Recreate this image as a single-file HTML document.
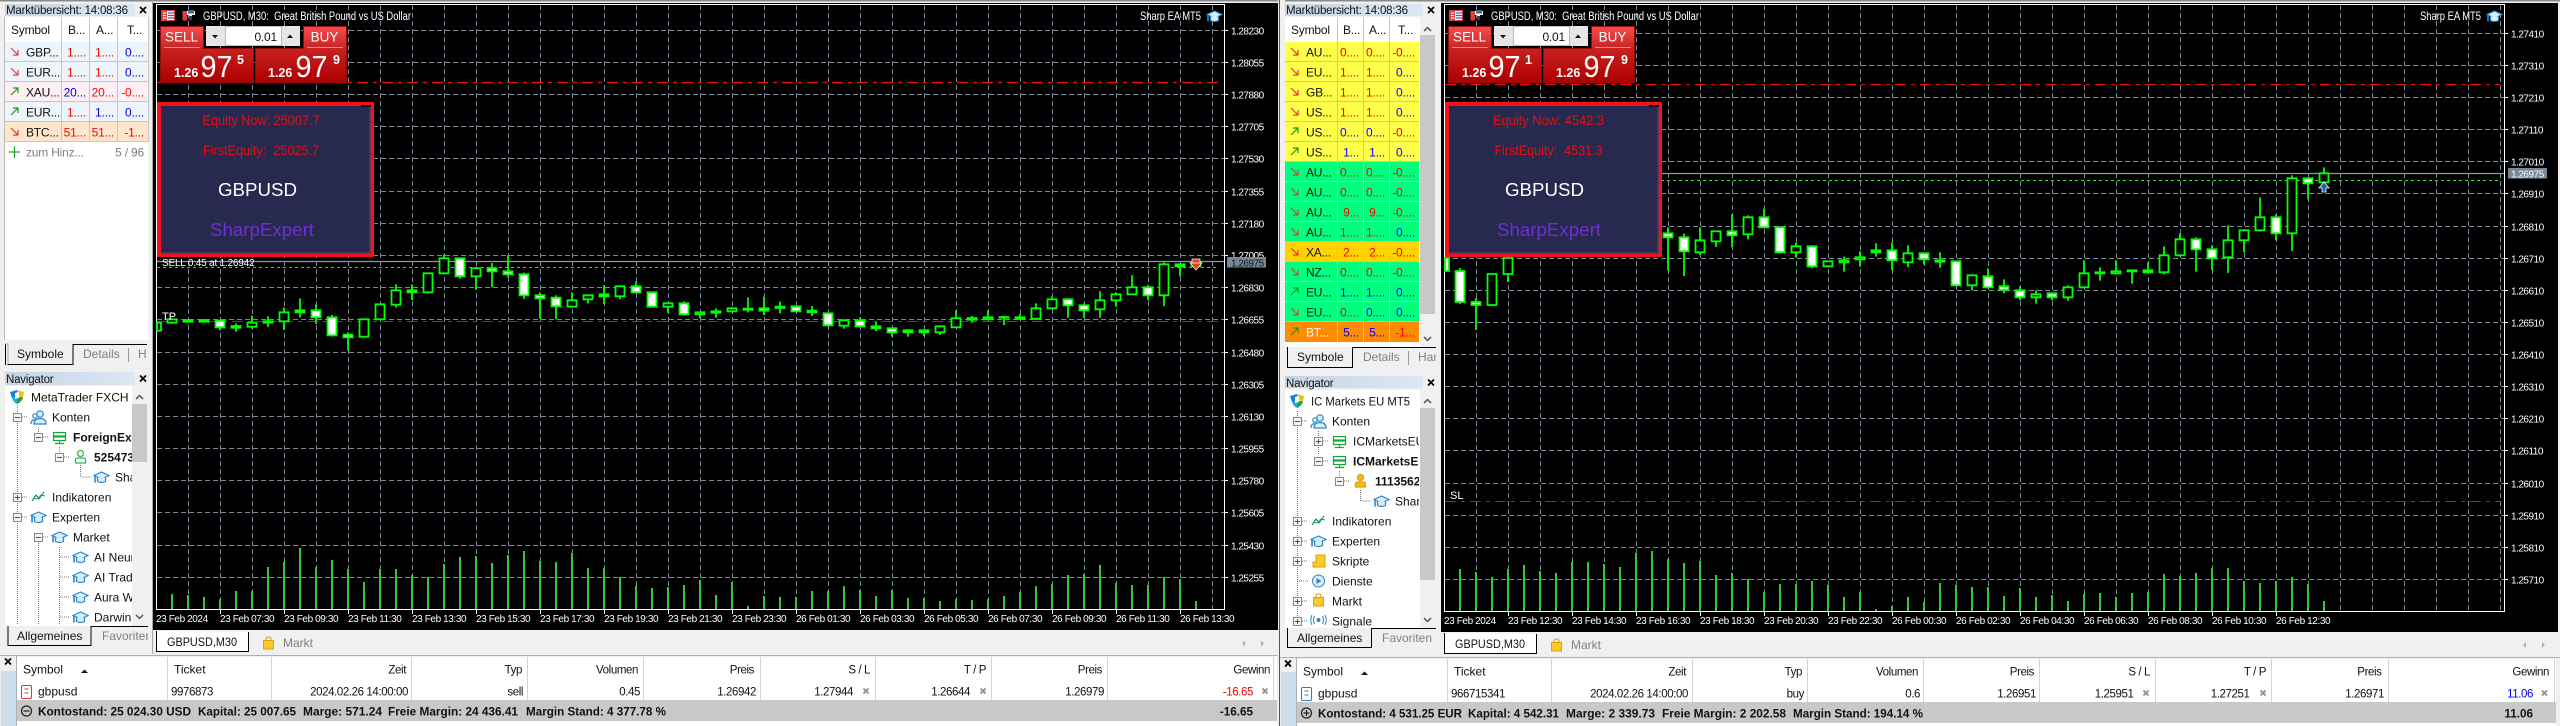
<!DOCTYPE html>
<html><head><meta charset="utf-8"><title>MetaTrader</title>
<style>
html,body{margin:0;padding:0;background:#f0f0f0;width:2560px;height:726px;overflow:hidden}
svg{display:block}
text{font-family:"Liberation Sans",sans-serif;font-size:12px;fill:#111;white-space:pre}
.b{font-weight:bold}
.g{fill:#808080}
.ax text{fill:#fff;font-size:10px;letter-spacing:-.5px}
.dt text{fill:#fff;font-size:10px;letter-spacing:-.4px}
.n text{font-size:11.5px;letter-spacing:-.4px}
.m text{font-size:12px;letter-spacing:-.2px}
.nv text{font-size:12px}
.r{fill:#f00}.u{fill:#00f}
.e{text-anchor:end}
.c{text-anchor:middle}
.sum text{font-size:11.7px;font-weight:bold}
.hd{font-size:11.5px;letter-spacing:-.2px}
.w{fill:#fff}
</style></head><body>
<svg xmlns="http://www.w3.org/2000/svg" width="2560" height="726" viewBox="0 0 2560 726">
<defs>
<linearGradient id="gs" x1="0" y1="0" x2="0" y2="1"><stop offset="0" stop-color="#f44c4c"/><stop offset="1" stop-color="#c92424"/></linearGradient>
<linearGradient id="gp" x1="0" y1="0" x2="0" y2="1"><stop offset="0" stop-color="#db3434"/><stop offset="1" stop-color="#ad0000"/></linearGradient>
<linearGradient id="gh" x1="0" y1="0" x2="1" y2="0"><stop offset="0" stop-color="#c6d5e4"/><stop offset="1" stop-color="#dbe7f3"/></linearGradient>
<pattern id="vl" patternUnits="userSpaceOnUse" x="188" y="5" width="32" height="8"><rect width="1" height="5" fill="#778899"/></pattern>
<pattern id="vr" patternUnits="userSpaceOnUse" x="1476" y="5" width="32" height="8"><rect width="1" height="5" fill="#778899"/></pattern>
<g id="dn"><path d="M0 0L7 7M7 2V7H2" fill="none" stroke="#e23b3b" stroke-width="1.2"/></g>
<g id="up"><path d="M0 7L7 0M2 0H7V5" fill="none" stroke="#12a012" stroke-width="1.2"/></g>
<g id="em"><rect x="-4" y="-4" width="8" height="8" fill="#f4f4f4" stroke="#8a8a8a"/><path d="M-2.5 0H2.5" stroke="#555"/></g>
<g id="ep"><rect x="-4" y="-4" width="8" height="8" fill="#f4f4f4" stroke="#8a8a8a"/><path d="M-2.5 0H2.5M0-2.5V2.5" stroke="#555"/></g>
<g id="cap" fill="none" stroke="#2b86c6" stroke-width="1.2"><path d="M0 4.5L7.5 1 15 4.5 7.5 8Z" fill="#d9eefb"/><path d="M3.5 6.5V10.5Q7.5 12.5 11.5 10.5V6.5" fill="#d9eefb"/><path d="M1 5V11.5" stroke-width="1.6"/></g>
<g id="ppl" fill="none" stroke="#2b86c6" stroke-width="1.2"><circle cx="9" cy="4" r="3.2" fill="#d9eefb"/><path d="M3 14Q3 8.5 9 8.5T15 14Z" fill="#d9eefb"/><circle cx="4" cy="6" r="2.2"/><path d="M0 14Q0 10 3.5 9.5"/></g>
<g id="srv" fill="none" stroke="#12a83a" stroke-width="1.2"><rect x=".5" y=".5" width="12" height="3.5"/><rect x=".5" y="5" width="12" height="3.5"/><path d="M6.5 9V12M2 11.5H11"/></g>
<g id="prs" stroke-width="1.3"><circle cx="5.5" cy="3.5" r="3"/><path d="M.5 13V10Q.5 8 3 8H8Q10.5 8 10.5 10V13Z"/></g>
<g id="ind" fill="none"><path d="M0 10L4 4 7 8 12 1" stroke="#1aa04a" stroke-width="1.2"/><path d="M1 7L5 8 9 4 13 5" stroke="#2b86c6" stroke-width="1"/></g>
<g id="bag"><path d="M3 4V2Q3 0 5.500 0T8 2V4" fill="none" stroke="#d9a300" stroke-width="1.1"/><path d="M.5 3.500H10.500V12H.5Z" fill="#fbc92d" stroke="#d9a300"/></g>
<g id="logo"><path d="M0 2L7 0V7L2 8Z" fill="#1b7fd0"/><path d="M7 0L14 2 13 7 7 6Z" fill="#f2c010"/><path d="M2 8L7 7V14Q3 12 2 8Z" fill="#23a9e8"/><path d="M7 7L13 7Q12 12 7 14Z" fill="#18a838"/><path d="M5 3L9 2V8L5 9Z" fill="#fff"/></g>
<g id="tb1"><rect x=".5" y=".5" width="13" height="10" fill="#fff" stroke="#d83a3a"/><path d="M1 1H6V10H1Z" fill="#d83a3a" opacity=".9"/><path d="M7 3H13M7 5.500H13M7 8H13" stroke="#2b6cc0" stroke-width="1.3"/><path d="M2 3H5M2 5.500H5M2 8H5" stroke="#fff"/></g>
<g id="tb2"><path d="M.5 1H5V10.500H.5Z" fill="#e04040"/><path d="M5 1H13V5H10V10.500H7V5H5Z" fill="#fff"/><rect x="6" y="0" width="6" height="3.500" fill="#4a6a90"/><rect x="7" y="6" width="3" height="4.500" fill="#2b3f5c"/></g>
<g id="x"><path d="M-3-3L3 3M3-3L-3 3" stroke="#000" stroke-width="1.7"/></g>
<g id="xg"><path d="M-2.500-2.500L2.500 2.500M2.500-2.500L-2.500 2.500" stroke="#8e8e8e" stroke-width="1.8"/></g>
</defs>

<rect width="2560" height="726" fill="#f0f0f0"/>
<rect width="2560" height="1.500" fill="#8a8a8a"/>

<!-- LEFT WINDOW panels -->
<rect x="5" y="4" width="130" height="12" fill="url(#gh)"/>
<text x="6" y="14" class="hd">Marktübersicht: 14:08:36</text>
<use href="#x" x="143" y="10"/>
<rect x="4.500" y="17" width="144" height="323" fill="#fff"/>
<rect x="5" y="42" width="143" height="40" fill="#edf5fb"/>
<rect x="5" y="82" width="143" height="20" fill="#fdeff4"/>
<rect x="5" y="102" width="143" height="20" fill="#edf5fb"/>
<rect x="5" y="122" width="143" height="20" fill="#fde6cb"/>
<path d="M61.500 17V142M89.500 17V142M117.500 17V142M148.500 17V142M5 61.500H148M5 81.500H148M5 101.500H148M5 121.500H148M5 141.500H148" stroke="#c6c6c6" fill="none"/>
<path d="M4.500 17V340" stroke="#bbb" fill="none"/>
<g class="m">
<text x="11" y="34">Symbol</text><text x="68" y="34">B...</text><text x="96" y="34">A...</text><text x="127" y="34">T...</text>
<text x="26" y="56.500">GBP...</text><text x="86" y="56.500" class="r e">1....</text><text x="114" y="56.500" class="r e">1....</text><text x="144" y="56.500" class="u e">0....</text>
<text x="26" y="76.500">EUR...</text><text x="86" y="76.500" class="r e">1....</text><text x="114" y="76.500" class="r e">1....</text><text x="144" y="76.500" class="u e">0....</text>
<text x="26" y="96.500">XAU...</text><text x="86" y="96.500" class="u e">20...</text><text x="114" y="96.500" class="r e">20...</text><text x="144" y="96.500" class="r e">-0....</text>
<text x="26" y="116.500">EUR...</text><text x="86" y="116.500" class="r e">1....</text><text x="114" y="116.500" class="u e">1....</text><text x="144" y="116.500" class="u e">0....</text>
<text x="26" y="136.500">BTC...</text><text x="86" y="136.500" class="r e">51...</text><text x="114" y="136.500" class="r e">51...</text><text x="144" y="136.500" class="r e">-1...</text>
<text x="26" y="156.500" class="g">zum Hinz...</text><text x="144" y="156.500" class="g e">5 / 96</text>
</g>
<use href="#dn" x="11" y="48"/><use href="#dn" x="11" y="68"/><use href="#up" x="11" y="88"/><use href="#up" x="11" y="108"/><use href="#dn" x="11" y="128"/>
<path d="M9 152H20M14.500 146.500V158" stroke="#18a818" stroke-width="1.2"/>

<!-- left tabs -->
<rect x="5" y="340" width="146" height="26" fill="#f0f0f0"/>
<path d="M5.500 344V365M8 344V364.500H73V344.500H147" fill="none" stroke="#000" stroke-width="1"/>
<path d="M5 344H8V364" fill="none" stroke="#aaa"/>
<text x="17" y="358">Symbole</text><text x="83" y="358" class="g">Details</text><path d="M128.500 348V362" stroke="#999"/><text x="138" y="358" class="g">H</text>
<rect x="5" y="372" width="130" height="13" fill="url(#gh)"/>
<text x="6" y="383" class="hd">Navigator</text>
<use href="#x" x="143" y="378.500"/>
<rect x="5" y="386" width="143" height="240" fill="#fff"/>
<rect x="132" y="386" width="16" height="240" fill="#f0f0f0"/>
<rect x="132" y="404" width="15" height="58" fill="#c8c8c8"/>
<path d="M136 399L139.500 395.500 143 399M136 615L139.500 618.500 143 615" fill="none" stroke="#555" stroke-width="1.500"/>
<path d="M17.500 403V625M38.500 427V433M38.500 543V625M59.500 447V453M59.500 547V625M80.500 465V477H91M22 417H28M22 497H28M22 517H28M43 437H49M43 537H49M64 457H70M60 557H70M60 577H70M60 597H70M60 617H70" stroke="#777" stroke-dasharray="1 1" fill="none"/>
<use href="#logo" x="10" y="390"/>
<use href="#em" x="17.500" y="417.500"/><use href="#ppl" x="31" y="410"/>
<use href="#em" x="38.500" y="437.500"/><use href="#srv" x="53" y="432"/>
<use href="#em" x="59.500" y="457.500"/><g fill="#fff" stroke="#2dbb55"><use href="#prs" x="75" y="450"/></g>
<use href="#cap" x="94" y="471"/>
<use href="#ep" x="17.500" y="497.500"/><use href="#ind" x="32" y="491"/>
<use href="#em" x="17.500" y="517.500"/><use href="#cap" x="31" y="511"/>
<use href="#em" x="38.500" y="537.500"/><use href="#cap" x="52" y="531"/>
<use href="#cap" x="73" y="551"/><use href="#cap" x="73" y="571"/><use href="#cap" x="73" y="591"/><use href="#cap" x="73" y="611"/>
<clipPath id="cn1"><rect x="5" y="386" width="127" height="240"/></clipPath>
<g class="nv" clip-path="url(#cn1)">
<text x="31" y="401.500">MetaTrader FXCH</text>
<text x="52" y="421.500">Konten</text>
<text x="73" y="441.500" class="b">ForeignExchange</text>
<text x="94" y="461.500" class="b">52547331</text>
<text x="115" y="481.500">Sharp EA</text>
<text x="52" y="501.500">Indikatoren</text>
<text x="52" y="521.500">Experten</text>
<text x="73" y="541.500">Market</text>
<text x="94" y="561.500">AI Neural</text>
<text x="94" y="581.500">AI Trader</text>
<text x="94" y="601.500">Aura Wave</text>
<text x="94" y="621.500">Darwin Pro</text>
</g>
<rect x="5" y="626" width="146" height="24" fill="#f0f0f0"/>
<path d="M8 626V645.500H91V626.500H148" fill="none" stroke="#000"/>
<text x="17" y="640">Allgemeines</text>
<clipPath id="fv1"><rect x="100" y="626" width="48" height="24"/></clipPath>
<text x="102" y="640" class="g" clip-path="url(#fv1)">Favoriten</text>
<path d="M152.500 0V654" stroke="#a8a8a8" fill="none"/>

<!-- LEFT CHART -->
<rect x="153" y="3" width="1125" height="627" fill="#000"/>
<path d="M156.500 4.500H1224.500V609.500H156.500Z" fill="none" stroke="#fff"/>
<rect x="157" y="5" width="1067" height="604" fill="url(#vl)"/>
<path d="M157 30.500H1224M157 62.500H1224M157 94.500H1224M157 126.500H1224M157 158.500H1224M157 191.500H1224M157 223.500H1224M157 255.500H1224M157 287.500H1224M157 319.500H1224M157 352.500H1224M157 384.500H1224M157 416.500H1224M157 448.500H1224M157 480.500H1224M157 512.500H1224M157 545.500H1224M157 577.500H1224" stroke="#778899" stroke-dasharray="5 3" fill="none"/>
<path d="M157 82.500H1220" stroke="#f01010" stroke-dasharray="11 5 4 5" fill="none" stroke-width="1.200"/>
<path d="M157 321.500H1220" stroke="#d81010" stroke-dasharray="11 5 4 5" fill="none"/>
<path d="M157 261.500H1224" stroke="#8f9aa0" stroke-width="1.200" fill="none"/>
<path d="M157 267.500H1216" stroke="#36d836" stroke-dasharray="3 3" fill="none"/>
<path fill="none" stroke="#32cd32" stroke-width="2" d="M172 609V594M188 609V595M204 609V597M220 609V599M236 609V591M252 609V591M268 609V567M284 609V562M300 609V548M316 609V567M332 609V560M348 609V569M364 609V582M380 609V569M396 609V569M412 609V575M428 609V577M444 609V564M460 609V557M476 609V556M492 609V563M508 609V555M524 609V551M540 609V561M556 609V562M572 609V553M588 609V568M604 609V568M620 609V577M636 609V586M652 609V588M668 609V587M684 609V585M700 609V580M716 609V595M732 609V582M748 609V606M764 609V596M780 609V597M796 609V597M812 609V591M828 609V591M844 609V586M860 609V590M876 609V596M892 609V590M908 609V598M924 609V598M940 609V601M956 609V599M972 609V600M988 609V599M1004 609V596M1020 609V592M1036 609V586M1052 609V584M1068 609V575M1084 609V574M1100 609V565M1116 609V583M1132 609V585M1148 609V585M1164 609V577M1180 609V579M1196 609V601"/>
<g transform="translate(0,230) scale(1,.33333)" stroke="#0f0" stroke-width="1.800">
<path vector-effect="non-scaling-stroke" fill="none" d="M172 267V281M220 292V301M236 280V305M252 257V296M268 259V291M284 232V300M300 205V262M316 224V282M332 255V320M348 307V362M364 268V323M380 222V270M396 163V233M412 163V210M428 130V190M444 73V133M460 85V146M476 112V178M492 99V172M508 76V142M524 128V207M540 187V266M556 196V268M572 187V233M588 193V220M604 166V222M620 166V208M636 154V190M652 187V233M668 220V248M684 214V256M700 247V265M716 235V263M732 232V247M748 202V247M764 200V255M780 215V250M796 229V244M812 228V258M828 250V290M844 268V296M860 263V292M876 276V303M892 295V320M908 298V320M924 298V318M940 289V315M956 241V292M972 258V278M988 241V270M1004 262V285M1020 252V270M1036 220V270M1052 199V236M1068 205V263M1084 220V263M1100 184V263M1116 187V230M1132 136V193M1148 166V211M1164 97V228M1180 100V140M1196 97V109"/>
<path vector-effect="non-scaling-stroke" fill="#000" d="M157 278h4V302h-4zM167.500 268h9V278h-9zM247.500 278h9V290h-9zM263.500 274h9V278h-9zM279.500 247h9V274h-9zM359.500 268h9V320h-9zM375.500 223h9V268h-9zM391.500 181h9V224h-9zM423.500 130h9V187h-9zM439.500 85h9V130h-9zM471.500 115h9V139h-9zM567.500 211h9V230h-9zM583.500 196h9V208h-9zM615.500 169h9V199h-9zM663.500 220h9V230h-9zM695.500 247h9V253h-9zM727.500 235h9V244h-9zM839.500 271h9V287h-9zM935.500 289h9V307h-9zM951.500 265h9V292h-9zM983.500 262h9V268h-9zM1031.500 235h9V266h-9zM1047.500 208h9V235h-9zM1095.500 211h9V238h-9zM1111.500 193h9V211h-9zM1127.500 172h9V193h-9zM1159.500 103h9V196h-9zM1191.500 97h9V109h-9z"/>
<path vector-effect="non-scaling-stroke" fill="#fff" d="M183.500 270h9V275h-9zM199.500 270h9V275h-9zM215.500 272h9V292h-9zM231.500 288h9V293h-9zM295.500 241h9V247h-9zM311.500 241h9V262h-9zM327.500 262h9V316h-9zM343.500 314h9V322h-9zM407.500 181h9V187h-9zM455.500 85h9V139h-9zM487.500 115h9V124h-9zM503.500 124h9V133h-9zM519.500 133h9V196h-9zM535.500 196h9V205h-9zM551.500 203h9V229h-9zM599.500 193h9V199h-9zM631.500 169h9V187h-9zM647.500 187h9V230h-9zM679.500 220h9V253h-9zM711.500 244h9V248h-9zM743.500 236h9V239h-9zM759.500 235h9V242h-9zM775.500 230h9V234h-9zM791.500 229h9V244h-9zM807.500 242h9V247h-9zM823.500 250h9V286h-9zM855.500 272h9V289h-9zM871.500 289h9V295h-9zM887.500 295h9V307h-9zM903.500 301h9V307h-9zM919.500 301h9V307h-9zM967.500 264h9V269h-9zM999.500 261h9V263h-9zM1015.500 262h9V267h-9zM1063.500 208h9V226h-9zM1079.500 226h9V241h-9zM1143.500 172h9V196h-9zM1175.500 103h9V109h-9z"/>
</g>
<path d="M1192 263H1200V259H1192ZM1190 263H1202L1196 270Z" fill="#e0401a" stroke="#fff" stroke-width=".7"/>
<text x="162" y="266" style="font-size:10px;fill:#fff;letter-spacing:-.2px">SELL 0.45 at 1.26942</text>
<text x="162" y="320" style="font-size:11px;fill:#fff">TP</text>
<path d="M1224 30.500H1228M1224 62.500H1228M1224 94.500H1228M1224 126.500H1228M1224 158.500H1228M1224 191.500H1228M1224 223.500H1228M1224 255.500H1228M1224 287.500H1228M1224 319.500H1228M1224 352.500H1228M1224 384.500H1228M1224 416.500H1228M1224 448.500H1228M1224 480.500H1228M1224 512.500H1228M1224 545.500H1228M1224 577.500H1228" stroke="#fff"/>
<g class="ax">
<text x="1231" y="34.500">1.28230</text><text x="1231" y="66.500">1.28055</text><text x="1231" y="98.500">1.27880</text><text x="1231" y="130.500">1.27705</text><text x="1231" y="162.500">1.27530</text><text x="1231" y="195.500">1.27355</text><text x="1231" y="227.500">1.27180</text><text x="1231" y="259">1.27005</text><text x="1231" y="291.500">1.26830</text><text x="1231" y="323.500">1.26655</text><text x="1231" y="356.500">1.26480</text><text x="1231" y="388.500">1.26305</text><text x="1231" y="420.500">1.26130</text><text x="1231" y="452.500">1.25955</text><text x="1231" y="484.500">1.25780</text><text x="1231" y="516.500">1.25605</text><text x="1231" y="549.500">1.25430</text><text x="1231" y="581.500">1.25255</text>
</g>
<rect x="1227" y="257" width="39" height="10.500" fill="#778899"/>
<text x="1231" y="266.500" style="font-size:10px;letter-spacing:-.5px;fill:#111">1.26975</text>
<path d="M220.500 610V614M284.500 610V614M348.500 610V614M412.500 610V614M476.500 610V614M540.500 610V614M604.500 610V614M668.500 610V614M732.500 610V614M796.500 610V614M860.500 610V614M924.500 610V614M988.500 610V614M1052.500 610V614M1116.500 610V614M1180.500 610V614" stroke="#fff"/>
<g class="dt">
<text x="156" y="622">23 Feb 2024</text><text x="220" y="622">23 Feb 07:30</text><text x="284" y="622">23 Feb 09:30</text><text x="348" y="622">23 Feb 11:30</text><text x="412" y="622">23 Feb 13:30</text><text x="476" y="622">23 Feb 15:30</text><text x="540" y="622">23 Feb 17:30</text><text x="604" y="622">23 Feb 19:30</text><text x="668" y="622">23 Feb 21:30</text><text x="732" y="622">23 Feb 23:30</text><text x="796" y="622">26 Feb 01:30</text><text x="860" y="622">26 Feb 03:30</text><text x="924" y="622">26 Feb 05:30</text><text x="988" y="622">26 Feb 07:30</text><text x="1052" y="622">26 Feb 09:30</text><text x="1116" y="622">26 Feb 11:30</text><text x="1180" y="622">26 Feb 13:30</text>
</g>
<text x="1140" y="20" style="font-size:12px;fill:#fff" textLength="61" lengthAdjust="spacingAndGlyphs">Sharp EA MT5</text>
<use href="#cap" x="1207" y="10"/>

<!-- left trade widget & equity -->
<g>
<use href="#tb1" x="161" y="10"/><use href="#tb2" x="182" y="10"/>
<text x="203" y="20" style="font-size:11.500px;fill:#fff" textLength="208" lengthAdjust="spacingAndGlyphs">GBPUSD, M30:  Great British Pound vs US Dollar</text>
<path d="M160.500 26.500H203.500V48.500H253.500V83H160.500Z" fill="url(#gp)" stroke="#8c0d0d"/>
<rect x="161" y="27" width="42" height="21" fill="url(#gs)"/>
<path d="M164 47.500H200" stroke="#f08a8a"/>
<path d="M303.500 26.500H346.500V83H255.500V48.500H303.500Z" fill="url(#gp)" stroke="#8c0d0d"/>
<rect x="304" y="27" width="42" height="21" fill="url(#gs)"/>
<path d="M307 47.500H343" stroke="#f08a8a"/>
<rect x="206" y="26" width="94" height="20" fill="#e6e6e6"/>
<rect x="225.500" y="26.500" width="56" height="19" fill="#fff" stroke="#bbb"/>
<path d="M212 35H218L215 38.500ZM287 38H293L290 34.500Z" fill="#111"/>
<text x="277" y="41" class="e" style="font-size:12px;letter-spacing:-.2px">0.01</text>
<text x="181.500" y="41.500" class="c w" style="font-size:13.500px">SELL</text>
<text x="324.500" y="41.500" class="c w" style="font-size:13.500px">BUY</text>
<text x="174" y="77" class="w b" style="font-size:12.500px">1.26</text>
<text x="200.500" y="77" class="w" style="font-size:31px" textLength="32" lengthAdjust="spacingAndGlyphs">97</text>
<text x="237" y="64" class="w b" style="font-size:12.500px">5</text>
<text x="268" y="77" class="w b" style="font-size:12.500px">1.26</text>
<text x="295.500" y="77" class="w" style="font-size:31px" textLength="32" lengthAdjust="spacingAndGlyphs">97</text>
<text x="333" y="64" class="w b" style="font-size:12.500px">9</text>
<rect x="159" y="104" width="213" height="151" fill="#27294e" stroke="#f5111a" stroke-width="4"/>
<path d="M370 106V253H161" fill="none" stroke="#3d3f66" stroke-width="1.500"/>
<rect x="361" y="105" width="10" height="1.500" fill="#000"/>
<text x="202.500" y="125" style="font-size:14px;fill:#e01212" textLength="117" lengthAdjust="spacingAndGlyphs">Equity Now: 25007.7</text>
<text x="203" y="155" style="font-size:14px;fill:#e01212" textLength="116" lengthAdjust="spacingAndGlyphs">FirstEquity:  25025.7</text>
<text x="218" y="196" class="w" style="font-size:18px" textLength="79" lengthAdjust="spacingAndGlyphs">GBPUSD</text>
<text x="210" y="236" style="font-size:18px;fill:#6f2fd4" textLength="104" lengthAdjust="spacingAndGlyphs">SharpExpert</text>
</g>

<!-- left bottom tabs -->
<rect x="153" y="630" width="1125" height="25" fill="#f0f0f0"/>
<path d="M156.500 631V651.500H248.500V632" fill="#fff" stroke="#000"/>
<text x="167" y="646" style="font-size:12px" textLength="70" lengthAdjust="spacingAndGlyphs">GBPUSD,M30</text>
<use href="#bag" x="263" y="637"/>
<text x="283" y="647" class="g">Markt</text>
<path d="M1245 640.500L1242 643.500 1245 646.500ZM1261 640.500L1264 643.500 1261 646.500Z" fill="#b0b0b0"/>

<!-- left toolbox -->
<rect x="0" y="655" width="1278" height="71" fill="#f0f0f0"/>
<rect x="1" y="671" width="15" height="55" fill="#cfdeed"/>
<use href="#x" x="8" y="661.500"/>
<rect x="17" y="657" width="1260" height="69" fill="#fff"/>
<path d="M0 655.500H1278M16.500 656V726" stroke="#b0b0b0" fill="none"/>
<path d="M167.500 657V700M271.500 657V700M411.500 657V700M527.500 657V700M643.500 657V700M760.500 657V700M875.500 657V700M991.500 657V700M1107.500 657V700M1273.500 657V700" stroke="#d4d4d4" fill="none"/>
<rect x="17" y="700" width="1260" height="21" fill="#c8c8c8"/>
<path d="M81 673H88L84.500 669.500Z" fill="#111"/>
<text x="23" y="673.500">Symbol</text><text x="174" y="673.500">Ticket</text>
<g class="n"><text x="406" y="673.500" class="e">Zeit</text><text x="522" y="673.500" class="e">Typ</text><text x="638" y="673.500" class="e">Volumen</text><text x="754" y="673.500" class="e">Preis</text><text x="870" y="673.500" class="e">S / L</text><text x="986" y="673.500" class="e">T / P</text><text x="1102" y="673.500" class="e">Preis</text><text x="1270" y="673.500" class="e">Gewinn</text></g>
<rect x="21.500" y="685.500" width="10" height="13" rx="1.500" fill="none" stroke="#d83a3a"/><path d="M24.500 689H28.500M24.500 693H28.500" stroke="#d83a3a"/>
<text x="38" y="695.500">gbpusd</text>
<g class="n"><text x="171" y="695.500">9976873</text><text x="408" y="695.500" class="e">2024.02.26 14:00:00</text><text x="523" y="695.500" class="e">sell</text><text x="640" y="695.500" class="e">0.45</text><text x="756" y="695.500" class="e">1.26942</text><text x="853" y="695.500" class="e">1.27944</text><text x="970" y="695.500" class="e">1.26644</text><text x="1104" y="695.500" class="e">1.26979</text><text x="1253" y="695.500" class="e r">-16.65</text></g>
<use href="#xg" x="866" y="691"/><use href="#xg" x="983" y="691"/><use href="#xg" x="1265" y="691"/>
<circle cx="26.500" cy="711" r="5" fill="none" stroke="#222" stroke-width="1.200"/><path d="M23.500 711H29.500" stroke="#222" stroke-width="1.200"/>
<g class="sum">
<text x="38" y="715.500" textLength="153" lengthAdjust="spacingAndGlyphs">Kontostand: 25 024.30 USD</text>
<text x="198" y="715.500" textLength="98" lengthAdjust="spacingAndGlyphs">Kapital: 25 007.65</text>
<text x="303" y="715.500" textLength="79" lengthAdjust="spacingAndGlyphs">Marge: 571.24</text>
<text x="388" y="715.500" textLength="130" lengthAdjust="spacingAndGlyphs">Freie Margin: 24 436.41</text>
<text x="526" y="715.500" textLength="140" lengthAdjust="spacingAndGlyphs">Margin Stand: 4 377.78 %</text>
<text x="1253" y="715.500" class="e">-16.65</text>
</g>

<!-- RIGHT WINDOW -->
<rect x="1278" y="0" width="7" height="726" fill="#f0f0f0"/>
<path d="M1279.500 0V726" stroke="#555"/>
<rect x="1285" y="4" width="138" height="12" fill="url(#gh)"/>
<text x="1286" y="14" class="hd">Marktübersicht: 14:08:36</text>
<use href="#x" x="1431" y="10"/>
<rect x="1285" y="17" width="151" height="330" fill="#fff"/>
<rect x="1420" y="17" width="16" height="330" fill="#f0f0f0"/>
<rect x="1420" y="35" width="15" height="279" fill="#c8c8c8"/>
<path d="M1424 31L1427.500 27.500 1431 31M1424 337L1427.500 340.500 1431 337" fill="none" stroke="#555" stroke-width="1.500"/>
<rect x="1285" y="42" width="134" height="120" fill="#ffff4a"/>
<rect x="1285" y="162" width="134" height="80" fill="#00ff7f"/>
<rect x="1285" y="242" width="134" height="20" fill="#ffd200"/>
<rect x="1285" y="262" width="134" height="60" fill="#00ff7f"/>
<rect x="1285" y="322" width="134" height="20" fill="#ff8c00"/>
<path d="M1337.500 17V342M1363.500 17V342M1389.500 17V342M1285 61.500H1419M1285 81.500H1419M1285 101.500H1419M1285 121.500H1419M1285 141.500H1419M1285 161.500H1419M1285 181.500H1419M1285 201.500H1419M1285 221.500H1419M1285 241.500H1419M1285 261.500H1419M1285 281.500H1419M1285 301.500H1419M1285 321.500H1419" stroke="#c4c4c4" fill="none"/>
<g class="m">
<text x="1291" y="34">Symbol</text><text x="1343" y="34">B...</text><text x="1369" y="34">A...</text><text x="1398" y="34">T...</text>
<text x="1306" y="56.500">AU...</text><text x="1359" y="56.500" class="r e">0....</text><text x="1385" y="56.500" class="r e">0....</text><text x="1415" y="56.500" class="r e">-0....</text>
<text x="1306" y="76.500">EU...</text><text x="1359" y="76.500" class="r e">1....</text><text x="1385" y="76.500" class="r e">1....</text><text x="1415" y="76.500" class="u e">0....</text>
<text x="1306" y="96.500">GB...</text><text x="1359" y="96.500" class="r e">1....</text><text x="1385" y="96.500" class="r e">1....</text><text x="1415" y="96.500" class="u e">0....</text>
<text x="1306" y="116.500">US...</text><text x="1359" y="116.500" class="r e">1....</text><text x="1385" y="116.500" class="r e">1....</text><text x="1415" y="116.500" class="u e">0....</text>
<text x="1306" y="136.500">US...</text><text x="1359" y="136.500" class="u e">0....</text><text x="1385" y="136.500" class="u e">0....</text><text x="1415" y="136.500" class="r e">-0....</text>
<text x="1306" y="156.500">US...</text><text x="1359" y="156.500" class="u e">1...</text><text x="1385" y="156.500" class="u e">1...</text><text x="1415" y="156.500" class="u e">0....</text>
<text x="1306" y="176.500">AU...</text><text x="1359" y="176.500" class="r e">0....</text><text x="1385" y="176.500" class="r e">0....</text><text x="1415" y="176.500" class="r e">-0....</text>
<text x="1306" y="196.500">AU...</text><text x="1359" y="196.500" class="r e">0....</text><text x="1385" y="196.500" class="r e">0....</text><text x="1415" y="196.500" class="r e">-0....</text>
<text x="1306" y="216.500">AU...</text><text x="1359" y="216.500" class="r e">9...</text><text x="1385" y="216.500" class="r e">9...</text><text x="1415" y="216.500" class="r e">-0....</text>
<text x="1306" y="236.500">AU...</text><text x="1359" y="236.500" class="r e">1....</text><text x="1385" y="236.500" class="r e">1....</text><text x="1415" y="236.500" class="u e">0....</text>
<text x="1306" y="256.500">XA...</text><text x="1359" y="256.500" class="r e">2...</text><text x="1385" y="256.500" class="r e">2...</text><text x="1415" y="256.500" class="r e">-0....</text>
<text x="1306" y="276.500">NZ...</text><text x="1359" y="276.500" class="r e">0....</text><text x="1385" y="276.500" class="r e">0....</text><text x="1415" y="276.500" class="r e">-0....</text>
<text x="1306" y="296.500">EU...</text><text x="1359" y="296.500" class="u e">1....</text><text x="1385" y="296.500" class="u e">1....</text><text x="1415" y="296.500" class="u e">0....</text>
<text x="1306" y="316.500">EU...</text><text x="1359" y="316.500" class="r e">0....</text><text x="1385" y="316.500" class="u e">0....</text><text x="1415" y="316.500" class="u e">0....</text>
<text x="1306" y="336.500" class="w">BT...</text><text x="1359" y="336.500" class="u e">5...</text><text x="1385" y="336.500" class="u e">5...</text><text x="1415" y="336.500" class="r e">-1...</text>
</g>
<use href="#dn" x="1291" y="48"/><use href="#dn" x="1291" y="68"/><use href="#dn" x="1291" y="88"/><use href="#dn" x="1291" y="108"/><use href="#up" x="1291" y="128"/><use href="#up" x="1291" y="148"/><use href="#dn" x="1291" y="168"/><use href="#dn" x="1291" y="188"/><use href="#dn" x="1291" y="208"/><use href="#dn" x="1291" y="228"/><use href="#dn" x="1291" y="248"/><use href="#dn" x="1291" y="268"/><use href="#up" x="1291" y="288"/><use href="#dn" x="1291" y="308"/><use href="#up" x="1291" y="328"/>

<rect x="1285" y="347" width="156" height="24" fill="#f0f0f0"/>
<path d="M1287.500 347V367.500H1352.500V347.500H1436" fill="none" stroke="#000"/>
<text x="1297" y="361">Symbole</text><text x="1363" y="361" class="g">Details</text><path d="M1408.500 351V365" stroke="#999"/>
<clipPath id="hr"><rect x="1416" y="348" width="20" height="20"/></clipPath>
<text x="1418" y="361" class="g" clip-path="url(#hr)">Handel</text>
<rect x="1285" y="376" width="138" height="12" fill="url(#gh)"/>
<text x="1286" y="387" class="hd">Navigator</text>
<use href="#x" x="1431" y="382.500"/>
<rect x="1285" y="390" width="151" height="238" fill="#fff"/>
<rect x="1420" y="390" width="16" height="238" fill="#f0f0f0"/>
<rect x="1420" y="408" width="15" height="172" fill="#c8c8c8"/>
<path d="M1424 403L1427.500 399.500 1431 403M1424 618L1427.500 621.500 1431 618" fill="none" stroke="#555" stroke-width="1.500"/>
<path d="M1297.500 411V625M1318.500 431V455M1339.500 471V477M1360.500 490V501H1371M1302 421H1308M1323 441H1329M1323 461H1329M1344 481H1350M1302 521H1308M1302 541H1308M1302 561H1308M1297 581H1308M1302 601H1308M1302 621H1308" stroke="#777" stroke-dasharray="1 1" fill="none"/>
<use href="#logo" x="1290" y="394"/>
<use href="#em" x="1297.500" y="421.500"/><use href="#ppl" x="1311" y="414"/>
<use href="#ep" x="1318.500" y="441.500"/><use href="#srv" x="1333" y="436"/>
<use href="#em" x="1318.500" y="461.500"/><use href="#srv" x="1333" y="456"/>
<use href="#em" x="1339.500" y="481.500"/><g fill="#f5bc1c" stroke="#d9a300"><use href="#prs" x="1355" y="474"/></g>
<use href="#cap" x="1374" y="495"/>
<use href="#ep" x="1297.500" y="521.500"/><use href="#ind" x="1312" y="515"/>
<use href="#ep" x="1297.500" y="541.500"/><use href="#cap" x="1311" y="535"/>
<use href="#ep" x="1297.500" y="561.500"/><path d="M1316 555H1325V567H1313V562H1316Z" fill="#fbc92d" stroke="#d9a300"/>
<g fill="#d9eefb" stroke="#2b86c6"><circle cx="1318.500" cy="581" r="6"/></g><path d="M1316.500 578L1321.500 581 1316.500 584Z" fill="#2b86c6"/>
<use href="#ep" x="1297.500" y="601.500"/><use href="#bag" x="1313" y="594"/>
<use href="#ep" x="1297.500" y="621.500"/><g fill="none" stroke="#2b86c6"><circle cx="1318.500" cy="620" r="1.500" fill="#2b86c6"/><path d="M1314.500 616Q1312.500 620 1314.500 624M1322.500 616Q1324.500 620 1322.500 624M1312 615Q1309.500 620 1312 625M1325 615Q1327.500 620 1325 625"/></g>
<clipPath id="cn2"><rect x="1285" y="390" width="134" height="238"/></clipPath>
<g class="nv" clip-path="url(#cn2)">
<text x="1311" y="405.500" textLength="99" lengthAdjust="spacingAndGlyphs">IC Markets EU MT5</text>
<text x="1332" y="425.500">Konten</text>
<text x="1353" y="445.500">ICMarketsEU-Demo</text>
<text x="1353" y="465.500" class="b">ICMarketsEU-Live</text>
<text x="1375" y="485.500" class="b">11135624</text>
<text x="1395" y="505.500">Sharp EA</text>
<text x="1332" y="525.500">Indikatoren</text>
<text x="1332" y="545.500">Experten</text>
<text x="1332" y="565.500">Skripte</text>
<text x="1332" y="585.500">Dienste</text>
<text x="1332" y="605.500">Markt</text>
<text x="1332" y="625.500">Signale</text>
</g>
<rect x="1285" y="628" width="156" height="24" fill="#f0f0f0"/>
<path d="M1287.500 628V647.500H1371.500V628.500H1436" fill="none" stroke="#000"/>
<text x="1297" y="642">Allgemeines</text><text x="1382" y="642" class="g">Favoriten</text>

<!-- RIGHT CHART -->
<rect x="1441" y="3" width="1117" height="629" fill="#000"/>
<path d="M1444.500 4.500H2504.500V611.500H1444.500Z" fill="none" stroke="#fff"/>
<rect x="1445" y="5" width="1059" height="606" fill="url(#vr)"/>
<path d="M1445 33.500H2504M1445 65.500H2504M1445 97.500H2504M1445 129.500H2504M1445 161.500H2504M1445 193.500H2504M1445 226.500H2504M1445 258.500H2504M1445 290.500H2504M1445 322.500H2504M1445 354.500H2504M1445 386.500H2504M1445 418.500H2504M1445 450.500H2504M1445 483.500H2504M1445 515.500H2504M1445 547.500H2504M1445 579.500H2504" stroke="#778899" stroke-dasharray="5 3" fill="none"/>
<path d="M1445 84.500H2500" stroke="#f01010" stroke-dasharray="11 5 4 5" fill="none"/>
<path d="M1445 501.500H2500" stroke="#d81010" stroke-dasharray="11 5 4 5" fill="none"/>
<path d="M1445 173.500H2504" stroke="#8f9aa0" stroke-width="1.200" fill="none"/>
<path d="M1445 180.500H2500" stroke="#2ee62e" stroke-dasharray="3 3" fill="none"/>
<path fill="none" stroke="#32cd32" stroke-width="2" d="M1460 611V569M1476 611V572M1492 611V577M1508 611V569M1524 611V565M1540 611V571M1556 611V573M1572 611V562M1588 611V562M1604 611V564M1620 611V567M1636 611V553M1652 611V551M1668 611V559M1684 611V563M1700 611V561M1716 611V575M1732 611V573M1748 611V579M1764 611V592M1780 611V584M1796 611V584M1812 611V581M1828 611V585M1844 611V597M1860 611V592M1876 611V609M1892 611V606M1908 611V597M1924 611V602M1940 611V583M1956 611V585M1972 611V587M1988 611V587M2004 611V596M2020 611V588M2036 611V597M2052 611V595M2068 611V601M2084 611V594M2100 611V593M2116 611V597M2132 611V593M2148 611V592M2164 611V574M2180 611V576M2196 611V573M2212 611V568M2228 611V568M2244 611V581M2260 611V583M2276 611V581M2292 611V577M2308 611V584M2324 611V601"/>
<g transform="translate(0,150) scale(1,.33333)" stroke="#0f0" stroke-width="1.800">
<path vector-effect="non-scaling-stroke" fill="none" d="M1460 354V462M1476 444V540M1508 324V396M1668 232V362M1684 250V378M1700 232V315M1716 244V291M1732 193V291M1748 196V268M1764 176V235M1780 232V310M1796 277V322M1812 289V355M1828 334V352M1844 320V365M1860 304V350M1876 280V320M1892 277V361M1908 286V351M1924 307V344M1940 307V353M1956 334V409M1972 373V421M1988 355V415M2004 388V430M2020 409V451M2036 421V461M2052 427V451M2068 406V452M2084 331V412M2100 352V392M2116 331V373M2132 361V401M2148 337V370M2164 289V373M2180 250V319M2196 262V365M2212 286V361M2228 226V369M2244 238V307M2260 142V245M2276 193V271M2292 76V303M2308 82V148M2324 52V100"/>
<path vector-effect="non-scaling-stroke" fill="#000" d="M1487.500 372h9V465h-9zM1503.500 324h9V372h-9zM1695.500 271h9V307h-9zM1711.500 244h9V274h-9zM1743.500 202h9V253h-9zM1791.500 289h9V307h-9zM1823.500 334h9V349h-9zM1839.500 331h9V337h-9zM1855.500 322h9V328h-9zM1903.500 310h9V337h-9zM1967.500 376h9V406h-9zM2031.500 433h9V442h-9zM2063.500 412h9V442h-9zM2079.500 370h9V412h-9zM2111.500 364h9V370h-9zM2159.500 316h9V367h-9zM2175.500 268h9V316h-9zM2223.500 271h9V322h-9zM2239.500 241h9V271h-9zM2255.500 202h9V241h-9zM2287.500 85h9V250h-9zM2319.500 70h9V97h-9z"/>
<path vector-effect="non-scaling-stroke" fill="#fff" d="M1445 324h4V363h-4zM1455.500 363h9V456h-9zM1471.500 456h9V465h-9zM1663.500 250h9V262h-9zM1679.500 262h9V304h-9zM1727.500 244h9V256h-9zM1759.500 202h9V232h-9zM1775.500 232h9V307h-9zM1807.500 289h9V349h-9zM1871.500 301h9V307h-9zM1887.500 301h9V331h-9zM1919.500 310h9V328h-9zM1935.500 331h9V335h-9zM1951.500 334h9V406h-9zM1983.500 379h9V412h-9zM1999.500 409h9V420h-9zM2015.500 421h9V442h-9zM2047.500 430h9V442h-9zM2095.500 367h9V370h-9zM2127.500 361h9V364h-9zM2143.500 361h9V367h-9zM2191.500 268h9V298h-9zM2207.500 298h9V325h-9zM2271.500 202h9V250h-9zM2303.500 85h9V100h-9z"/>
</g>
<path d="M2324 182L2329 188H2326V192H2322V188H2319Z" fill="#1f5fa8" stroke="#fff" stroke-width=".8"/>
<text x="1450" y="499" style="font-size:11px;fill:#fff">SL</text>
<path d="M2504 33.500H2508M2504 65.500H2508M2504 97.500H2508M2504 129.500H2508M2504 161.500H2508M2504 193.500H2508M2504 226.500H2508M2504 258.500H2508M2504 290.500H2508M2504 322.500H2508M2504 354.500H2508M2504 386.500H2508M2504 418.500H2508M2504 450.500H2508M2504 483.500H2508M2504 515.500H2508M2504 547.500H2508M2504 579.500H2508" stroke="#fff"/>
<g class="ax">
<text x="2511" y="37.500">1.27410</text><text x="2511" y="69.500">1.27310</text><text x="2511" y="101.500">1.27210</text><text x="2511" y="133.500">1.27110</text><text x="2511" y="165.500">1.27010</text><text x="2511" y="197.500">1.26910</text><text x="2511" y="230.500">1.26810</text><text x="2511" y="262.500">1.26710</text><text x="2511" y="294.500">1.26610</text><text x="2511" y="326.500">1.26510</text><text x="2511" y="358.500">1.26410</text><text x="2511" y="390.500">1.26310</text><text x="2511" y="422.500">1.26210</text><text x="2511" y="454.500">1.26110</text><text x="2511" y="487.500">1.26010</text><text x="2511" y="519.500">1.25910</text><text x="2511" y="551.500">1.25810</text><text x="2511" y="583.500">1.25710</text>
</g>
<rect x="2508" y="168" width="39" height="10.500" fill="#778899"/>
<text x="2511" y="177.500" style="font-size:10px;letter-spacing:-.5px;fill:#fff">1.26975</text>
<path d="M1508.500 612V616M1572.500 612V616M1636.500 612V616M1700.500 612V616M1764.500 612V616M1828.500 612V616M1892.500 612V616M1956.500 612V616M2020.500 612V616M2084.500 612V616M2148.500 612V616M2212.500 612V616M2276.500 612V616" stroke="#fff"/>
<g class="dt">
<text x="1444" y="624">23 Feb 2024</text><text x="1508" y="624">23 Feb 12:30</text><text x="1572" y="624">23 Feb 14:30</text><text x="1636" y="624">23 Feb 16:30</text><text x="1700" y="624">23 Feb 18:30</text><text x="1764" y="624">23 Feb 20:30</text><text x="1828" y="624">23 Feb 22:30</text><text x="1892" y="624">26 Feb 00:30</text><text x="1956" y="624">26 Feb 02:30</text><text x="2020" y="624">26 Feb 04:30</text><text x="2084" y="624">26 Feb 06:30</text><text x="2148" y="624">26 Feb 08:30</text><text x="2212" y="624">26 Feb 10:30</text><text x="2276" y="624">26 Feb 12:30</text>
</g>
<text x="2420" y="20" style="font-size:12px;fill:#fff" textLength="61" lengthAdjust="spacingAndGlyphs">Sharp EA MT5</text>
<use href="#cap" x="2487" y="10"/>

<g transform="translate(1288,0)">
<use href="#tb1" x="161" y="10"/><use href="#tb2" x="182" y="10"/>
<text x="203" y="20" style="font-size:11.500px;fill:#fff" textLength="208" lengthAdjust="spacingAndGlyphs">GBPUSD, M30:  Great British Pound vs US Dollar</text>
<path d="M160.500 26.500H203.500V48.500H253.500V83H160.500Z" fill="url(#gp)" stroke="#8c0d0d"/>
<rect x="161" y="27" width="42" height="21" fill="url(#gs)"/>
<path d="M164 47.500H200" stroke="#f08a8a"/>
<path d="M303.500 26.500H346.500V83H255.500V48.500H303.500Z" fill="url(#gp)" stroke="#8c0d0d"/>
<rect x="304" y="27" width="42" height="21" fill="url(#gs)"/>
<path d="M307 47.500H343" stroke="#f08a8a"/>
<rect x="206" y="26" width="94" height="20" fill="#e6e6e6"/>
<rect x="225.500" y="26.500" width="56" height="19" fill="#fff" stroke="#bbb"/>
<path d="M212 35H218L215 38.500ZM287 38H293L290 34.500Z" fill="#111"/>
<text x="277" y="41" class="e" style="font-size:12px;letter-spacing:-.2px">0.01</text>
<text x="181.500" y="41.500" class="c w" style="font-size:13.500px">SELL</text>
<text x="324.500" y="41.500" class="c w" style="font-size:13.500px">BUY</text>
<text x="174" y="77" class="w b" style="font-size:12.500px">1.26</text>
<text x="200.500" y="77" class="w" style="font-size:31px" textLength="32" lengthAdjust="spacingAndGlyphs">97</text>
<text x="237" y="64" class="w b" style="font-size:12.500px">1</text>
<text x="268" y="77" class="w b" style="font-size:12.500px">1.26</text>
<text x="295.500" y="77" class="w" style="font-size:31px" textLength="32" lengthAdjust="spacingAndGlyphs">97</text>
<text x="333" y="64" class="w b" style="font-size:12.500px">9</text>
<rect x="159" y="104" width="213" height="151" fill="#27294e" stroke="#f5111a" stroke-width="4"/>
<path d="M370 106V253H161" fill="none" stroke="#3d3f66" stroke-width="1.500"/>
<rect x="361" y="105" width="10" height="1.500" fill="#000"/>
<text x="205" y="125" style="font-size:14px;fill:#e01212" textLength="111" lengthAdjust="spacingAndGlyphs">Equity Now: 4542.3</text>
<text x="206.500" y="155" style="font-size:14px;fill:#e01212" textLength="108" lengthAdjust="spacingAndGlyphs">FirstEquity:  4531.3</text>
<text x="217" y="196" class="w" style="font-size:18px" textLength="79" lengthAdjust="spacingAndGlyphs">GBPUSD</text>
<text x="209" y="236" style="font-size:18px;fill:#6f2fd4" textLength="104" lengthAdjust="spacingAndGlyphs">SharpExpert</text>
</g>

<!-- right bottom tabs -->
<rect x="1441" y="632" width="1119" height="25" fill="#f0f0f0"/>
<path d="M1444.500 633V653.500H1536.500V634" fill="#fff" stroke="#000"/>
<text x="1455" y="648" style="font-size:12px" textLength="70" lengthAdjust="spacingAndGlyphs">GBPUSD,M30</text>
<use href="#bag" x="1551" y="639"/>
<text x="1571" y="649" class="g">Markt</text>
<path d="M2526 642L2523 645 2526 648ZM2542 642L2545 645 2542 648Z" fill="#b0b0b0"/>

<!-- right toolbox -->
<rect x="1280" y="657" width="1280" height="69" fill="#f0f0f0"/>
<rect x="1281" y="672" width="15" height="54" fill="#cfdeed"/>
<use href="#x" x="1288" y="663.500"/>
<rect x="1297" y="659" width="1259" height="67" fill="#fff"/>
<path d="M1280 657.500H2560M1296.500 658V726" stroke="#b0b0b0" fill="none"/>
<path d="M1447.500 659V702M1551.500 659V702M1692.500 659V702M1807.500 659V702M1923.500 659V702M2039.500 659V702M2155.500 659V702M2271.500 659V702M2388.500 659V702M2554.500 659V702" stroke="#d4d4d4" fill="none"/>
<rect x="1297" y="702" width="1259" height="21" fill="#c8c8c8"/>
<path d="M1361 675H1368L1364.500 671.500Z" fill="#111"/>
<text x="1303" y="675.500">Symbol</text><text x="1454" y="675.500">Ticket</text>
<g class="n"><text x="1686" y="675.500" class="e">Zeit</text><text x="1802" y="675.500" class="e">Typ</text><text x="1918" y="675.500" class="e">Volumen</text><text x="2034" y="675.500" class="e">Preis</text><text x="2150" y="675.500" class="e">S / L</text><text x="2266" y="675.500" class="e">T / P</text><text x="2381.500" y="675.500" class="e">Preis</text><text x="2549" y="675.500" class="e">Gewinn</text></g>
<rect x="1301.500" y="687.500" width="10" height="13" rx="1.500" fill="none" stroke="#2b7dc0"/><path d="M1304.500 691H1308.500M1304.500 695H1308.500" stroke="#2b7dc0"/>
<text x="1318" y="697.500">gbpusd</text>
<g class="n"><text x="1451" y="697.500">966715341</text><text x="1688" y="697.500" class="e">2024.02.26 14:00:00</text><text x="1804" y="697.500" class="e">buy</text><text x="1920" y="697.500" class="e">0.6</text><text x="2036" y="697.500" class="e">1.26951</text><text x="2133.500" y="697.500" class="e">1.25951</text><text x="2249.500" y="697.500" class="e">1.27251</text><text x="2384" y="697.500" class="e">1.26971</text><text x="2533" y="697.500" class="e u">11.06</text></g>
<use href="#xg" x="2146" y="693"/><use href="#xg" x="2263" y="693"/><use href="#xg" x="2544.500" y="693"/>
<circle cx="1306.500" cy="713" r="5" fill="none" stroke="#222" stroke-width="1.200"/><path d="M1303.500 713H1309.500M1306.500 710V716" stroke="#222" stroke-width="1.200"/>
<g class="sum">
<text x="1318" y="717.500" textLength="144" lengthAdjust="spacingAndGlyphs">Kontostand: 4 531.25 EUR</text>
<text x="1468" y="717.500" textLength="91" lengthAdjust="spacingAndGlyphs">Kapital: 4 542.31</text>
<text x="1566" y="717.500" textLength="89" lengthAdjust="spacingAndGlyphs">Marge: 2 339.73</text>
<text x="1662" y="717.500" textLength="124" lengthAdjust="spacingAndGlyphs">Freie Margin: 2 202.58</text>
<text x="1793" y="717.500" textLength="130" lengthAdjust="spacingAndGlyphs">Margin Stand: 194.14 %</text>
<text x="2533" y="717.500" class="e">11.06</text>
</g>
</svg>
</body></html>
